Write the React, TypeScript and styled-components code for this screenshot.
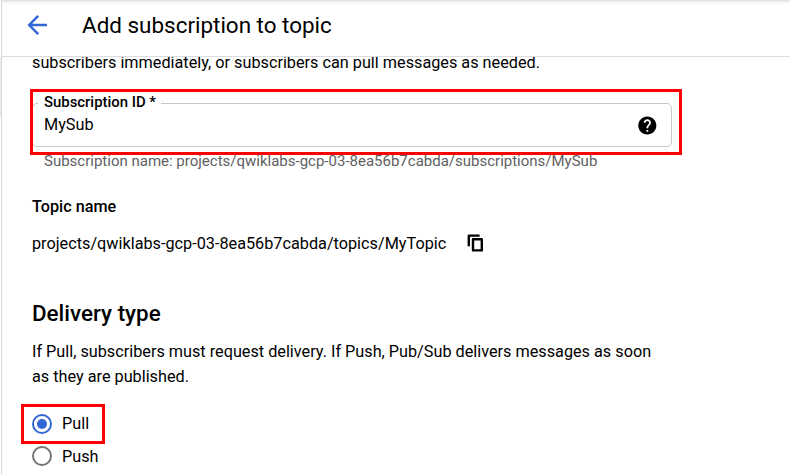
import React from 'react';
import styled, { createGlobalStyle } from 'styled-components';

const GlobalStyle = createGlobalStyle`
  * { box-sizing: border-box; }
  body { margin: 0; background: #fff; overflow: hidden; }
`;

const Page = styled.div`
  display: grid;
  grid-template-columns: 1px 1fr;
  width: 790px;
  height: 475px;
  overflow: hidden;
  background: #fff;
  color: #000;
  font-family: Roboto, sans-serif;
  font-size: 16.24px;
`;

const NavEdge = styled.div`
  padding-top: 57px;
  &::before {
    content: '';
    display: block;
    height: 60px;
    background: #e8eaf6;
  }
`;

const Panel = styled.div`
  display: flex;
  flex-direction: column;
  min-width: 0;
  height: 475px;
  border-left: 1px solid #dadada;
`;

const Header = styled.header`
  display: flex;
  align-items: center;
  flex: none;
  height: 57px;
  padding: 0 0 6px 25px;
  border-bottom: 1px solid #dadce0;
  background: linear-gradient(#dcdcdc, #f4f4f4 2px, #fff 5px);
`;

const Title = styled.h1`
  margin: 0 0 0 33px;
  font-size: 22.45px;
  font-weight: 400;
  line-height: 28px;
`;

const Content = styled.main`
  flex: 1;
  min-height: 0;
  overflow: hidden;
  padding-left: 30px;
`;

const Text = styled.p`
  margin: 0;
  line-height: 25px;
  white-space: nowrap;
`;

const Intro = styled(Text)`
  margin-top: -7px;
`;

const FieldGroup = styled.div`
  position: relative;
  width: 640px;
  margin-top: 28px;
`;

const Field = styled.div`
  position: relative;
  display: flex;
  align-items: center;
  justify-content: space-between;
  height: 44px;
  padding: 0 14px 0 11px;
  border: 1px solid #c8c8c8;
  border-radius: 5px;
`;

const FieldValue = styled(Text)`
  padding-bottom: 2px;
`;

const FieldLabel = styled.span`
  position: absolute;
  top: -11px;
  left: 5px;
  padding: 0 5px 0 6px;
  background: #fff;
  font-size: 14.9px;
  font-weight: 500;
  line-height: 18px;
  white-space: nowrap;
`;

const Hint = styled.p`
  margin: 4px 0 0 12px;
  color: #5f6062;
  font-size: 15px;
  line-height: 20px;
  white-space: nowrap;
`;

const Highlight = styled.div`
  position: absolute;
  border: 3px solid #f00;
  pointer-events: none;
`;

const FieldHighlight = styled(Highlight)`
  top: -14px;
  right: -10px;
  left: -2px;
  height: 66px;
`;

const OptionHighlight = styled(Highlight)`
  inset: -9px auto -9px -11px;
  width: 84px;
`;

const TopicLabel = styled.h3`
  margin: 26px 0 0;
  font-size: 16.2px;
  font-weight: 500;
  line-height: 20px;
`;

const TopicRow = styled.div`
  display: flex;
  align-items: center;
  gap: 19px;
  margin-top: 14px;
  height: 24px;
`;

const SectionTitle = styled.h2`
  margin: 44px 0 0;
  font-size: 22.4px;
  font-weight: 500;
  line-height: 28px;
`;

const Description = styled.div`
  margin-top: 12px;
`;

const RadioGroup = styled.div`
  display: flex;
  flex-direction: column;
  align-items: flex-start;
  margin-top: 24px;
`;

const RadioRow = styled.label`
  position: relative;
  display: flex;
  align-items: center;
  gap: 10px;
  height: 22px;
  & + & { margin-top: 10px; }
`;

const OptionText = styled(Text)<{ $raised?: boolean }>`
  padding-bottom: ${(p) => (p.$raised ? 2 : 0)}px;
`;

const RadioMark = styled.span<{ $on?: boolean }>`
  display: flex;
  align-items: center;
  justify-content: center;
  width: 20px;
  height: 20px;
  border: 2px solid ${(p) => (p.$on ? '#3367d6' : '#757575')};
  border-radius: 50%;
  &::after {
    content: '';
    width: 10px;
    height: 10px;
    border-radius: 50%;
    background: ${(p) => (p.$on ? '#3367d6' : 'transparent')};
  }
`;

const BackIcon = () => (
  <svg width="22" height="22" viewBox="0 0 22 22" fill="none" stroke="#3367d6" strokeWidth="2.5">
    <path d="M20 11H3M11.2 1.8L2.2 11L11.2 20.2" />
  </svg>
);

const HelpIcon = () => (
  <svg width="19" height="19" viewBox="1.7 1.5 21 21">
    <path d="M12 2C6.48 2 2 6.48 2 12s4.48 10 10 10 10-4.48 10-10S17.52 2 12 2zm1 17h-2v-2h2v2zm2.07-7.75l-.9.92C13.45 12.9 13 13.5 13 15h-2v-.5c0-1.1.45-2.1 1.17-2.83l1.24-1.26c.37-.36.59-.86.59-1.41 0-1.1-.9-2-2-2s-2 .9-2 2H8c0-2.21 1.79-4 4-4s4 1.79 4 4c0 .88-.36 1.68-.93 2.25z" />
  </svg>
);

const CopyIcon = () => (
  <svg width="22" height="22" viewBox="0 0 22 22" fill="none" stroke="#000" strokeWidth="2.4" strokeLinejoin="round">
    <path d="M3.8 14.2V3.6H14.6" />
    <rect x="8" y="7.2" width="8.8" height="11.2" />
  </svg>
);

export default function App() {
  return (
    <>
      <GlobalStyle />
      <Page>
        <NavEdge />
        <Panel>
          <Header>
            <BackIcon />
            <Title>Add subscription to topic</Title>
          </Header>
          <Content>
            <Intro>subscribers immediately, or subscribers can pull messages as needed.</Intro>
            <FieldGroup>
              <Field>
                <FieldLabel>Subscription ID *</FieldLabel>
                <FieldValue>MySub</FieldValue>
                <HelpIcon />
              </Field>
              <FieldHighlight />
              <Hint>Subscription name: projects/qwiklabs-gcp-03-8ea56b7cabda/subscriptions/MySub</Hint>
            </FieldGroup>
            <TopicLabel>Topic name</TopicLabel>
            <TopicRow>
              <Text>projects/qwiklabs-gcp-03-8ea56b7cabda/topics/MyTopic</Text>
              <CopyIcon />
            </TopicRow>
            <SectionTitle>Delivery type</SectionTitle>
            <Description>
              <Text>If Pull, subscribers must request delivery. If Push, Pub/Sub delivers messages as soon</Text>
              <Text>as they are published.</Text>
            </Description>
            <RadioGroup>
              <RadioRow>
                <RadioMark $on />
                <OptionText $raised>Pull</OptionText>
                <OptionHighlight />
              </RadioRow>
              <RadioRow>
                <RadioMark />
                <OptionText>Push</OptionText>
              </RadioRow>
            </RadioGroup>
          </Content>
        </Panel>
      </Page>
    </>
  );
}
